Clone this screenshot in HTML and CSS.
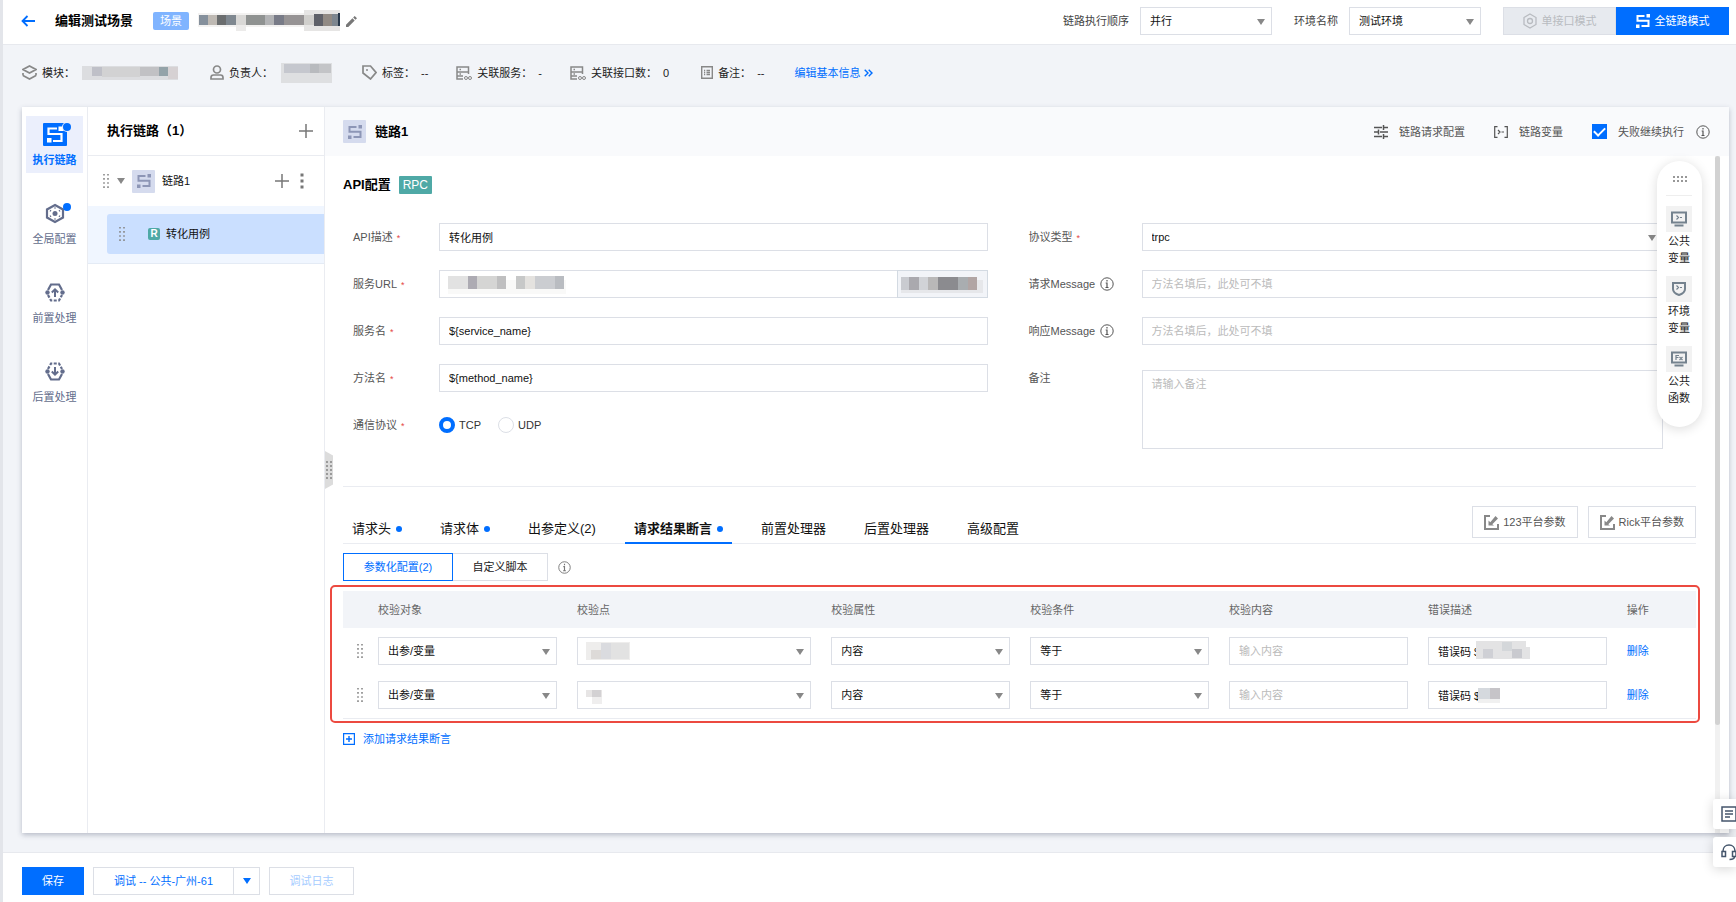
FILE: index.html
```
<!DOCTYPE html>
<html lang="zh-CN">
<head>
    <meta charset="UTF-8">
    <meta name="viewport" content="width=device-width, initial-scale=1.0">
    <title>编辑测试场景</title>
    <link rel="stylesheet" href="styles.css">
</head>
<body>
    <!-- shared icons -->
    <svg class="defs" width="0" height="0" aria-hidden="true">
        <symbol id="i-link" viewBox="0 0 14 14">
            <path d="M8.500 2H1.500V6.800H12.500V12H5.500" fill="none" stroke="currentColor" stroke-width="2"/>
            <path d="M10.500 0h3.500v3.500h-3.500zM0 10.500h3.500V14H0z" fill="currentColor"/>
        </symbol>
        <symbol id="i-info" viewBox="0 0 14 14">
            <circle cx="7" cy="7" r="6.200" fill="none" stroke="currentColor"/>
            <path d="M7 3v1.600M5.700 6H7v4.500M5.500 10.500h3" fill="none" stroke="currentColor" stroke-width="1.200"/>
        </symbol>
        <symbol id="i-plus" viewBox="0 0 14 14">
            <path d="M7 0v14M0 7h14" stroke="currentColor" stroke-width="1.500"/>
        </symbol>
        <symbol id="i-grip" viewBox="0 0 8 14">
            <path d="M2 0v14M6 0v14" stroke="currentColor" stroke-width="1.600" stroke-dasharray="1.600 2.500"/>
        </symbol>
        <symbol id="i-server" viewBox="0 0 16 14">
            <path d="M1 1h11.500v5H1zM1 1v12h6M1 6v4h6M12.500 6v2M3.500 3.500h1.500M3.500 8h1.500" fill="none" stroke="currentColor" stroke-width="1.500"/>
            <circle cx="10" cy="12" r="1.500" fill="none" stroke="currentColor"/>
            <circle cx="14" cy="12" r="1.500" fill="none" stroke="currentColor"/>
        </symbol>
        <symbol id="i-edit" viewBox="0 0 15 15">
            <path d="M6 1H1v13h13V9" fill="none" stroke="currentColor" stroke-width="2"/>
            <path d="M4.500 10.500V5.500l1.800 1.800L11.500 1l2.500 2.500-5.700 5.700 1.700 1.300z" fill="currentColor"/>
        </symbol>
    </svg>

    <header class="topbar">
        <button class="icon-btn back" aria-label="返回"><svg width="14" height="12" viewBox="0 0 14 12"><path d="M14 6H1.500M6.500 1l-5 5 5 5" fill="none" stroke="currentColor" stroke-width="1.800"/></svg></button>
        <h1>编辑测试场景</h1>
        <span class="badge">场景</span>
        <svg class="mosaic" width="142" height="24" viewBox="0 0 142 24">
            <path fill="#f3f2f1" d="M0 4h142v14H0z"/>
            <path fill="#85909c" d="M1 6h9v10H1z"/><path fill="#beb9b3" d="M10 6h9v10h-9z"/>
            <path fill="#6b6e6f" d="M19 6h9v10h-9z"/><path fill="#7f8890" d="M28 6h10v10H28z"/>
            <path fill="#d9d8d6" d="M38 6h10v10H38z"/><path fill="#ecebea" d="M38 16h10v6H38z"/>
            <path fill="#8f9291" d="M48 6h19v10H48z"/>
            <path fill="#b2b3b5" d="M67 6h9v10h-9z"/><path fill="#787b87" d="M76 6h10v10H76z"/>
            <path fill="#969394" d="M86 6h20v10H86z"/><path fill="#e6e5e4" d="M106 1h36v21h-36z"/>
            <path fill="#d0cfcc" d="M106 6h10v10h-10z"/>
            <path fill="#5f6169" d="M116 5h9v12h-9z"/><path fill="#918a84" d="M125 5h9v12h-9z"/>
            <path fill="#7d868f" d="M134 5h6v12h-6z"/><path fill="#28384a" d="M140 4h2v13h-2z"/>
        </svg>
        <button class="icon-btn" aria-label="编辑名称"><svg width="11" height="11" viewBox="0 0 12 12"><path d="M0 12V9.500L7 2.500 9.500 5l-7 7zM7.800 1.700L9.500 0 12 2.500l-1.700 1.700z" fill="#777"/></svg></button>
        <div class="topbar-right">
            <label for="order">链路执行顺序</label>
            <div class="select"><select id="order"><option>并行</option></select></div>
            <label for="env" class="env-label">环境名称</label>
            <div class="select"><select id="env"><option>测试环境</option></select></div>
            <div class="mode">
                <button disabled><svg width="14" height="16" viewBox="0 0 14 16"><path d="M7 1l6 3.500v7L7 15l-6-3.500v-7z" fill="none" stroke="currentColor" stroke-width="1.300"/><circle cx="7" cy="8" r="2.500" fill="none" stroke="currentColor" stroke-width="1.300"/></svg>单接口模式</button>
                <button class="on"><svg width="14" height="14"><use href="#i-link"/></svg>全链路模式</button>
            </div>
        </div>
    </header>

    <section class="info">
        <div class="info-item module"><svg width="15" height="15" viewBox="0 0 15 15"><path d="M7.500 1L14 4.500 7.500 8 1 4.500zM1 10.500L7.500 14 14 10.500M1 8v2.500M14 8v2.500" fill="none" stroke="currentColor" stroke-width="1.700"/></svg>模块：
            <svg class="mosaic" width="96" height="14" viewBox="0 0 96 14"><path fill="#dcdde0" d="M0 0h96v14H0z"/><path fill="#bfc0c8" d="M10 1h10v9H10z"/><path fill="#d2d2d3" d="M20 1h38v10H20z"/><path fill="#c1c1c4" d="M58 1h19v9H58z"/><path fill="#94a3a9" d="M77 1h9v9h-9z"/><path fill="#d6d1d3" d="M86 1h10v12H86z"/></svg>
        </div>
        <div class="info-item owner"><svg width="14" height="15" viewBox="0 0 14 15"><circle cx="7" cy="4.500" r="3.500" fill="none" stroke="currentColor" stroke-width="1.700"/><path d="M1 14v-1.500C1 11 2 10 3.500 10h7c1.500 0 2.500 1 2.500 2.500V14z" fill="none" stroke="currentColor" stroke-width="1.700"/></svg>负责人：
            <svg class="mosaic" width="52" height="20" viewBox="0 0 52 20"><path fill="#dedfe1" d="M1 0h51v20H1z"/><path fill="#c5c7ce" d="M4 1h26v9H4z"/><path fill="#b8babe" d="M30 1h9v9h-9z"/><path fill="#c3c4c7" d="M39 1h12v9H39z"/></svg>
        </div>
        <div class="info-item tag"><svg width="15" height="15" viewBox="0 0 15 15"><path d="M1 1h7.500l5.500 6.500L8.500 14 1 8z" fill="none" stroke="currentColor" stroke-width="1.700"/><circle cx="5" cy="5" r="1" fill="currentColor"/></svg>标签：<span>--</span></div>
        <div class="info-item service"><svg width="16" height="14"><use href="#i-server"/></svg>关联服务：<span>-</span></div>
        <div class="info-item port"><svg width="16" height="14"><use href="#i-server"/></svg>关联接口数：<span>0</span></div>
        <div class="info-item remark"><svg width="12" height="13" viewBox="0 0 12 13"><path d="M.7.700h10.600v11.600H.7zM3 4.500h1.200M5.500 4.500H9M3 6.500h1.200M5.500 6.500H9M3 8.500h1.200M5.500 8.500H9" fill="none" stroke="currentColor" stroke-width="1.400"/></svg>备注：<span>--</span></div>
        <a href="#">编辑基本信息<svg width="9" height="8" viewBox="0 0 9 8"><path d="M.7.700L4 4 .7 7.300M4.700.700L8 4 4.700 7.300" fill="none" stroke="currentColor" stroke-width="1.400"/></svg></a>
    </section>

    <main class="card">
        <nav class="rail">
            <a href="#" class="active">
                <svg width="28" height="26" viewBox="0 0 28 26"><rect x="0" y="2" width="24" height="23" rx="1" fill="#006eff"/><path d="M14 7.500H5.500V13H18.500V20H10" fill="none" stroke="#fff" stroke-width="2.200"/><path d="M4 17h4.500v4.500H4zM15.500 5.500h5V10h-5z" fill="#fff"/><circle cx="24" cy="6" r="5" fill="#ebeffc"/><circle cx="24" cy="6" r="4" fill="#006eff"/></svg>
                执行链路
            </a>
            <a href="#">
                <svg width="28" height="26" viewBox="0 0 28 26"><path d="M12 5l8 4.500v8L12 22l-8-4.500v-8z" fill="none" stroke="#636d8c" stroke-width="2.200"/><circle cx="12" cy="13.500" r="2.500" fill="#636d8c"/><path d="M12 7.500v1M12 18.500v1M7 10.500l1 .6M16 15.900l1 .6M7 16.500l1-.6M16 11.100l1-.6" stroke="#636d8c" stroke-width="1.800"/><circle cx="24" cy="7" r="4" fill="#006eff"/></svg>
                全局配置
            </a>
            <a href="#">
                <svg width="28" height="26" viewBox="0 0 28 26"><path d="M5 11l3-5.500h8l3 5.500" fill="none" stroke="#636d8c" stroke-width="2.200"/><path d="M5 16l3 5.500h8l3-5.500" fill="none" stroke="#636d8c" stroke-width="2.200" stroke-dasharray="3 1.500"/><circle cx="4.500" cy="13.500" r="2.200" fill="#636d8c"/><circle cx="19.500" cy="13.500" r="2.200" fill="#636d8c"/><path d="M12 18v-7M8.800 13.500L12 10.300l3.200 3.200" fill="none" stroke="#636d8c" stroke-width="2"/></svg>
                前置处理
            </a>
            <a href="#">
                <svg width="28" height="26" viewBox="0 0 28 26"><path d="M5 11l3-5.500h8l3 5.500" fill="none" stroke="#636d8c" stroke-width="2.200" stroke-dasharray="3 1.500"/><path d="M5 16l3 5.500h8l3-5.500" fill="none" stroke="#636d8c" stroke-width="2.200"/><circle cx="4.500" cy="13.500" r="2.200" fill="#636d8c"/><circle cx="19.500" cy="13.500" r="2.200" fill="#636d8c"/><path d="M12 9v7M8.800 13.500l3.200 3.200 3.200-3.200" fill="none" stroke="#636d8c" stroke-width="2"/></svg>
                后置处理
            </a>
        </nav>

        <aside class="tree">
            <div class="tree-head"><h2>执行链路（1）</h2><button class="icon-btn" aria-label="新增链路"><svg width="14" height="14"><use href="#i-plus"/></svg></button></div>
            <div class="tree-row">
                <svg class="grip" width="8" height="14"><use href="#i-grip"/></svg>
                <i class="caret"></i>
                <span class="chip"><svg width="14" height="14"><use href="#i-link"/></svg></span>
                <span class="name">链路1</span>
                <button class="icon-btn" aria-label="新增用例"><svg width="14" height="14"><use href="#i-plus"/></svg></button>
                <button class="icon-btn" aria-label="更多"><svg width="4" height="16" viewBox="0 0 4 16"><path d="M.5.500h3v3h-3zM.5 6.500h3v3h-3zM.5 12.500h3v3h-3z" fill="currentColor"/></svg></button>
            </div>
            <div class="tree-group">
                <div class="tree-item"><svg class="grip" width="8" height="14"><use href="#i-grip"/></svg><b>R</b>转化用例</div>
            </div>
        </aside>

        <section class="detail">
            <div class="detail-head">
                <span class="chip"><svg width="14" height="14"><use href="#i-link"/></svg></span>
                <h2>链路1</h2>
                <div class="tools">
                    <button class="tool"><svg width="14" height="14" viewBox="0 0 14 14"><path d="M0 2.500h8M10 2.500h4M0 7h4M6 7h8M0 11.500h8M10 11.500h4M9.500 0v5M4.500 4.500v5M9.500 9v5" fill="none" stroke="currentColor" stroke-width="1.500"/></svg>链路请求配置</button>
                    <button class="tool"><svg width="14" height="12" viewBox="0 0 14 12"><path d="M3.500.700H.7v10.600h2.800M10.500.700h2.800v10.600h-2.800M4 4l2 2-2 2M7.500 6h2.500" fill="none" stroke="currentColor" stroke-width="1.200"/></svg>链路变量</button>
                    <label class="check"><input type="checkbox" checked>失败继续执行</label>
                    <svg width="14" height="14"><use href="#i-info"/></svg>
                </div>
            </div>

            <div class="detail-body">
                <div class="section-title"><h2>API配置</h2><span class="rpc">RPC</span></div>

                <form class="form">
                    <div class="col">
                        <div class="field"><label for="desc">API描述<em>*</em></label><input id="desc" type="text" value="转化用例"></div>
                        <div class="field"><label for="url">服务URL<em>*</em></label>
                            <div class="url">
                                <input id="url" type="text">
                                <svg class="mosaic" width="118" height="20" viewBox="0 0 118 20"><path fill="#f9f9f8" d="M0 4h118v14H0z"/><path fill="#e2e2e2" d="M0 0h20v13H0z"/><path fill="#adabb3" d="M20 0h9v13h-9z"/><path fill="#d5d5d4" d="M29 0h20v13H29z"/><path fill="#bfbfc0" d="M49 0h9v13h-9z"/><path fill="#c7c8c8" d="M68 0h9v13h-9z"/><path fill="#e4e2df" d="M77 0h10v13H77z"/><path fill="#cbcdd1" d="M87 0h20v13H87z"/><path fill="#b9bcc1" d="M107 0h9v13h-9z"/></svg>
                                <span class="suffix"><svg width="82" height="20" viewBox="0 0 82 20"><path fill="#e6e7ea" d="M0 3h82v13H0z"/><path fill="#c9cbd0" d="M0 0h8v13H0z"/><path fill="#aaa9ae" d="M8 0h10v13H8z"/><path fill="#d1d3d7" d="M18 0h9v13h-9z"/><path fill="#b9b8b8" d="M27 0h10v13H27z"/><path fill="#8b8b8f" d="M37 0h20v13H37z"/><path fill="#a9adb0" d="M57 0h10v13H57z"/><path fill="#b1a5a4" d="M67 0h9v13h-9z"/></svg></span>
                            </div>
                        </div>
                        <div class="field"><label for="service">服务名<em>*</em></label><input id="service" type="text" value="${service_name}"></div>
                        <div class="field"><label for="method">方法名<em>*</em></label><input id="method" type="text" value="${method_name}"></div>
                        <div class="field"><span class="label">通信协议<em>*</em></span>
                            <label class="radio"><input type="radio" name="proto" checked>TCP</label>
                            <label class="radio"><input type="radio" name="proto">UDP</label>
                        </div>
                    </div>
                    <div class="col wide">
                        <div class="field"><label for="type">协议类型<em>*</em></label><div class="select"><select id="type"><option>trpc</option></select></div></div>
                        <div class="field"><label for="req">请求Message<svg width="14" height="14"><use href="#i-info"/></svg></label><input id="req" type="text" placeholder="方法名填后，此处可不填"></div>
                        <div class="field"><label for="rsp">响应Message<svg width="14" height="14"><use href="#i-info"/></svg></label><input id="rsp" type="text" placeholder="方法名填后，此处可不填"></div>
                        <div class="field area"><label for="note">备注</label><textarea id="note" placeholder="请输入备注"></textarea></div>
                    </div>
                </form>

                <div class="tabs">
                    <button class="dot">请求头</button>
                    <button class="dot">请求体</button>
                    <button>出参定义(2)</button>
                    <button class="dot on">请求结果断言</button>
                    <button>前置处理器</button>
                    <button>后置处理器</button>
                    <button>高级配置</button>
                    <div class="platform">
                        <button class="btn"><svg width="15" height="15"><use href="#i-edit"/></svg>123平台参数</button>
                        <button class="btn"><svg width="15" height="15"><use href="#i-edit"/></svg>Rick平台参数</button>
                    </div>
                </div>

                <div class="segment">
                    <button class="on">参数化配置(2)</button><button>自定义脚本</button>
                    <svg width="13" height="13"><use href="#i-info"/></svg>
                </div>

                <div class="highlight">
                    <table>
                        <colgroup><col class="c-grip"><col class="c-std"><col class="c-point"><col class="c-std"><col class="c-std"><col class="c-std"><col class="c-std"><col></colgroup>
                        <thead>
                            <tr><th></th><th>校验对象</th><th>校验点</th><th>校验属性</th><th>校验条件</th><th>校验内容</th><th>错误描述</th><th>操作</th></tr>
                        </thead>
                        <tbody>
                            <tr>
                                <td><svg class="grip" width="8" height="14"><use href="#i-grip"/></svg></td>
                                <td><div class="select"><select aria-label="校验对象"><option>出参/变量</option></select></div></td>
                                <td><div class="select"><select aria-label="校验点"><option></option></select><svg class="mosaic" width="44" height="18" viewBox="0 0 44 18"><path fill="#eeedec" d="M0 0h44v18H0z"/><path fill="#dddad8" d="M5 8h10v9H5z"/><path fill="#dadbdf" d="M15 1h10v16H15z"/><path fill="#e2e2e2" d="M25 1h18v16H25z"/></svg></div></td>
                                <td><div class="select"><select aria-label="校验属性"><option>内容</option></select></div></td>
                                <td><div class="select"><select aria-label="校验条件"><option>等于</option></select></div></td>
                                <td><input type="text" aria-label="校验内容" placeholder="输入内容"></td>
                                <td class="err"><input type="text" aria-label="错误描述" value="错误码 $"><svg class="mosaic" width="54" height="18" viewBox="0 0 54 18"><path fill="#e3e3e4" d="M0 0h50v6h4v12H0z"/><path fill="#cfd0d5" d="M7 8h10v9H7z"/><path fill="#d4d7da" d="M26 1h10v9H26z"/><path fill="#c9cacf" d="M36 8h10v9H36z"/></svg></td>
                                <td><a href="#">删除</a></td>
                            </tr>
                            <tr>
                                <td><svg class="grip" width="8" height="14"><use href="#i-grip"/></svg></td>
                                <td><div class="select"><select aria-label="校验对象"><option>出参/变量</option></select></div></td>
                                <td><div class="select"><select aria-label="校验点"><option></option></select><svg class="mosaic" width="44" height="18" viewBox="0 0 44 18"><path fill="#e7e5e5" d="M0 4h16v7H0z"/><path fill="#d3d1d3" d="M6 4h9v7H6z"/><path fill="#efeeee" d="M6 11h10v7H6z"/></svg></div></td>
                                <td><div class="select"><select aria-label="校验属性"><option>内容</option></select></div></td>
                                <td><div class="select"><select aria-label="校验条件"><option>等于</option></select></div></td>
                                <td><input type="text" aria-label="校验内容" placeholder="输入内容"></td>
                                <td class="err"><input type="text" aria-label="错误描述" value="错误码 $"><svg class="mosaic" width="54" height="18" viewBox="0 0 54 18"><path fill="#d5d9de" d="M2 2h12v11H2z"/><path fill="#c6c4c8" d="M14 2h10v11H14z"/><path fill="#f0f0f0" d="M2 13h22v4H2z"/></svg></td>
                                <td><a href="#">删除</a></td>
                            </tr>
                        </tbody>
                    </table>
                </div>

                <a href="#" class="add"><svg width="12" height="12" viewBox="0 0 12 12"><path d="M.5.500h11v11H.5zM6 3v6M3 6h6" fill="none" stroke="currentColor" stroke-width="1.400"/></svg>添加请求结果断言</a>
            </div>

            <div class="splitter"><svg width="6" height="18" viewBox="0 0 6 18"><path d="M1 0v18M5 0v18" stroke="#777" stroke-width="1.300" stroke-dasharray="2 2"/></svg></div>
            <div class="scroll"><i></i></div>
            <div class="palette">
                <svg class="dots" width="14" height="6" viewBox="0 0 14 6"><path d="M0 1h14M0 5h14" stroke="#777" stroke-width="1.600" stroke-dasharray="2 2"/></svg>
                <button><span><svg width="16" height="16" viewBox="0 0 16 16"><path d="M1 1.500h14v10H1zM3.500 14.500h9" fill="none" stroke="currentColor" stroke-width="2"/><path d="M5.500 4.500l2 2-2 2M9 6.500h2" fill="none" stroke="currentColor" stroke-width="1.200"/></svg></span>公共变量</button>
                <button><span><svg width="16" height="16" viewBox="0 0 16 16"><path d="M2 2h12v6c0 3-3 5-6 6-3-1-6-3-6-6z" fill="none" stroke="currentColor" stroke-width="2"/><path d="M5.500 4.500l2 2-2 2M9 6.500h2" fill="none" stroke="currentColor" stroke-width="1.200"/></svg></span>环境变量</button>
                <button><span><svg width="16" height="16" viewBox="0 0 16 16"><path d="M1 1.500h14v10H1zM3.500 14.500h9" fill="none" stroke="currentColor" stroke-width="2"/><path d="M5 9V4.500h3M5 6.500h2.500M8.500 6l3 3M11.500 6l-3 3" fill="none" stroke="currentColor" stroke-width="1.200"/></svg></span>公共函数</button>
            </div>
        </section>
    </main>

    <footer class="actions">
        <button class="btn primary">保存</button>
        <div class="split"><button class="btn">调试 -- 公共-广州-61</button><button class="btn" aria-label="选择环境"><i class="caret"></i></button></div>
        <button class="btn" disabled>调试日志</button>
    </footer>

    <div class="side-float">
        <button aria-label="文档"><svg width="16" height="16" viewBox="0 0 16 16"><path d="M1 1h14v14H1zM4 5h8M4 8h8M4 11h5" fill="none" stroke="currentColor" stroke-width="1.500"/></svg></button>
        <button aria-label="客服"><svg width="16" height="17" viewBox="0 0 16 17"><path d="M2 8V7c0-3.500 2.500-6 6-6s6 2.500 6 6v1M1 7.500h3.500v5H1zM11.500 7.500H15v5h-3.500zM13.500 12.500c0 2-2 3-5 3" fill="none" stroke="currentColor" stroke-width="1.500"/></svg></button>
    </div>
</body>
</html>
```

FILE: styles.css
```
* {
    box-sizing: border-box;
}
body {
    margin: 0;
    min-height: 100vh;
    display: flex;
    flex-direction: column;
    background: #f2f4f8;
    border-left: 3px solid #e3e5ea;
    color: #111;
    font: 11px/16px "Liberation Sans", "Noto Sans CJK SC", sans-serif;
}
svg {
    flex: none;
    display: block;
}
.defs {
    position: absolute;
}
h1, h2 {
    margin: 0;
    font-size: 13px;
    line-height: 20px;
    color: #000;
}
a {
    color: #006eff;
    text-decoration: none;
}
button, input, select, textarea {
    font: inherit;
    color: inherit;
    margin: 0;
}
button {
    padding: 0;
    border: 0;
    background: none;
    cursor: pointer;
}
.icon-btn {
    color: #777;
}
input[type="text"], select, textarea {
    display: block;
    width: 100%;
    height: 28px;
    padding: 0 9px;
    border: 1px solid #dcdfe6;
    border-radius: 0;
    background: #fff;
    outline: none;
}
textarea {
    height: 79px;
    padding: 5px 9px;
    resize: none;
}
::placeholder {
    color: #bbb;
    opacity: 1;
}
select {
    appearance: none;
}
.select {
    position: relative;
    flex: 1;
}
.select::after {
    content: "";
    position: absolute;
    right: 7px;
    top: 12px;
    border: 4px solid transparent;
    border-top: 6px solid #888;
    border-bottom: 0;
    pointer-events: none;
}
.caret {
    display: block;
    border: 4px solid transparent;
    border-top: 6px solid #888;
    border-bottom: 0;
}
.grip {
    color: #888;
}
.chip {
    display: flex;
    align-items: center;
    justify-content: center;
    width: 23px;
    height: 23px;
    background: #d5dbee;
    color: #8d96b6;
    border-radius: 1px;
}

/* top bar */
.topbar {
    display: flex;
    align-items: center;
    height: 45px;
    padding: 0 7px 2px 18px;
    background: #fff;
    border-bottom: 1px solid #e7e9ee;
}
.back {
    color: #006eff;
    margin-right: 20px;
}
.badge {
    margin: 0 9px 0 20px;
    padding: 1px 7px;
    background: #80b4ff;
    color: #fff;
    border-radius: 2px;
}
.topbar .mosaic {
    margin-right: 6px;
}
.topbar-right {
    display: flex;
    align-items: center;
    margin-left: auto;
    color: #444;
}
.topbar-right .select {
    flex: none;
    width: 132px;
    margin-left: 11px;
    color: #111;
}
.env-label {
    margin-left: 22px;
}
.mode {
    display: flex;
    margin-left: 22px;
}
.mode button {
    display: flex;
    align-items: center;
    justify-content: center;
    gap: 5px;
    width: 113px;
    height: 28px;
    background: #e7eaef;
    border: 1px solid #dcdfe6;
    color: #b8bbc0;
}
.mode .on {
    background: #006eff;
    border-color: #006eff;
    color: #fff;
}

/* basic info */
.info {
    display: flex;
    align-items: center;
    height: 62px;
    padding: 0 0 7px 19px;
    color: #222;
}
.info-item {
    display: flex;
    align-items: center;
    gap: 7px;
}
.info-item > svg:first-child {
    color: #888;
    margin-right: -2px;
}
.info-item span {
    margin-left: -1px;
}
.module, .port {
    margin-right: 32px;
}
.owner, .remark {
    margin-right: 30px;
}
.tag, .service {
    margin-right: 28px;
}
.info a {
    display: flex;
    align-items: center;
    gap: 4px;
}

/* card */
.card {
    flex: 1;
    display: flex;
    margin: 0 7px 19px 19px;
    background: #fff;
    box-shadow: 0 2px 5px rgba(50, 60, 90, 0.3);
}
.rail {
    width: 66px;
    padding: 9px 4px;
    border-right: 1px solid #eaecf1;
}
.rail a {
    display: flex;
    flex-direction: column;
    align-items: center;
    gap: 5px;
    height: 57px;
    margin-bottom: 22px;
    padding-top: 5px;
    color: #636d8c;
}
.rail svg {
    margin-left: 4px;
}
.rail .active {
    background: #ebeffc;
    color: #006eff;
    font-weight: bold;
}
.tree {
    width: 237px;
    border-right: 1px solid #eaecf1;
}
.tree-head {
    display: flex;
    align-items: center;
    justify-content: space-between;
    height: 49px;
    padding: 0 11px 0 19px;
    border-bottom: 1px solid #eaecf1;
}
.tree-row {
    display: flex;
    align-items: center;
    height: 50px;
    padding: 0 20px 0 14px;
}
.tree-row .caret {
    margin: 0 7px;
}
.tree-row .name {
    flex: 1;
    margin-left: 7px;
}
.tree-row .icon-btn + .icon-btn {
    margin-left: 11px;
}
.tree-group {
    padding: 8px 0 9px 19px;
    background: #f0f6ff;
    border-bottom: 1px solid #e4ebf5;
}
.tree-item {
    display: flex;
    align-items: center;
    height: 40px;
    padding-left: 11px;
    background: #cadfff;
    border-radius: 3px 0 0 3px;
}
.tree-item b {
    width: 12px;
    margin: 0 6px 0 22px;
    background: #4fa9a6;
    color: #fff;
    border-radius: 2px;
    font-size: 10px;
    line-height: 12px;
    text-align: center;
}

/* detail */
.detail {
    position: relative;
    flex: 1;
    min-width: 0;
}
.detail-head {
    display: flex;
    align-items: center;
    height: 49px;
    padding: 0 19px 0 18px;
    background: #f9fafc;
}
.detail-head h2 {
    margin-left: 9px;
}
.tools {
    display: flex;
    align-items: center;
    margin-left: auto;
    color: #555;
}
.tool {
    display: flex;
    align-items: center;
    gap: 11px;
    margin-right: 29px;
}
.check {
    display: flex;
    align-items: center;
    gap: 11px;
    margin-right: 12px;
}
.check input {
    appearance: none;
    display: flex;
    align-items: center;
    justify-content: center;
    width: 15px;
    height: 15px;
    background: #006eff;
}
.check input::before {
    content: "";
    width: 9px;
    height: 5px;
    margin-bottom: 3px;
    border: solid #fff;
    border-width: 0 0 2px 2px;
    transform: rotate(-45deg);
}
.detail-body {
    padding: 19px 33px 0 18px;
}
.section-title {
    display: flex;
    align-items: center;
    height: 19px;
}
.rpc {
    margin-left: 8px;
    padding: 0 4px;
    background: #4fa9a6;
    color: #fff;
    font-size: 12px;
    line-height: 18px;
    border-radius: 1px;
}
.form {
    display: flex;
    gap: 41px;
    padding: 29px 33px 37px 10px;
    border-bottom: 1px solid #eaecf1;
}
.col {
    flex: 1;
    display: flex;
    flex-direction: column;
    gap: 19px;
}
.field {
    display: flex;
    align-items: center;
    height: 28px;
    color: #555;
}
.field input[type="text"], .field .select {
    flex: 1;
    color: #111;
}
.field > label:first-child, .label {
    display: flex;
    align-items: center;
    width: 86px;
}
.wide .field > label:first-child {
    width: 113px;
}
.field label svg {
    margin-left: 5px;
}
.field em {
    margin: 2px 0 0 4px;
    color: #e54545;
    font-size: 9px;
    font-style: normal;
}
.area {
    align-items: flex-start;
    height: auto;
}
.area label {
    padding-top: 6px;
}
.area textarea {
    flex: 1;
    margin-top: 6px;
}
.url {
    position: relative;
    flex: 1;
    display: flex;
}
.url .mosaic {
    position: absolute;
    left: 9px;
    top: 6px;
}
.suffix {
    width: 91px;
    margin-left: -1px;
    padding: 6px 3px 0;
    background: #f2f4f8;
    border: 1px solid #d3dae2;
}
.field .radio {
    display: flex;
    align-items: center;
    gap: 4px;
    margin-right: 17px;
    color: #333;
}
.radio input {
    appearance: none;
    width: 16px;
    height: 16px;
    border: 1px solid #dcdfe6;
    border-radius: 50%;
}
.radio input:checked {
    border: 4px solid #006eff;
}

/* tabs */
.tabs {
    display: flex;
    align-items: flex-end;
    gap: 20px;
    height: 57px;
    border-bottom: 1px solid #eaecf1;
}
.tabs > button {
    display: flex;
    align-items: center;
    height: 29px;
    margin-bottom: -1px;
    padding: 0 9px;
    border-bottom: 2px solid transparent;
    font-size: 13px;
}
.tabs .dot::after {
    content: "";
    width: 6px;
    height: 6px;
    margin-left: 5px;
    background: #006eff;
    border-radius: 50%;
}
.tabs .on {
    border-bottom-color: #006eff;
    font-weight: bold;
}
.platform {
    display: flex;
    gap: 10px;
    margin: 0 0 5px auto;
    color: #555;
}
.btn {
    display: flex;
    align-items: center;
    justify-content: center;
    gap: 4px;
    height: 28px;
    border: 1px solid #dcdfe6;
    background: #fff;
}
.platform .btn {
    height: 32px;
    padding: 0 11px;
}
.platform svg {
    color: #888;
}
.segment {
    display: flex;
    align-items: center;
    margin-top: 9px;
    color: #777;
}
.segment button {
    height: 28px;
    width: 95px;
    border: 1px solid #dcdfe6;
    border-left: 0;
    color: #222;
}
.segment .on {
    width: 110px;
    border: 1px solid #006eff;
    color: #006eff;
}
.segment svg {
    margin-left: 10px;
}

/* assertions */
.highlight {
    margin: 4px -4px 0 -13px;
    padding: 4px 2px 2px 11px;
    border: 2px solid #ec4a40;
    border-radius: 5px;
}
table {
    width: 100%;
    table-layout: fixed;
    border-collapse: collapse;
    border-bottom: 1px solid #eaecf1;
}
.c-grip {
    width: 25px;
}
.c-std {
    width: 14.7%;
}
.c-point {
    width: 18.8%;
}
th {
    height: 37px;
    padding: 0 10px;
    background: #f2f4f8;
    color: #666;
    font-weight: normal;
    text-align: left;
}
td {
    height: 45px;
    padding: 0 10px;
}
td:first-child {
    padding: 0 0 0 13px;
}
.select .mosaic {
    position: absolute;
    left: 9px;
    top: 5px;
}
.err {
    position: relative;
}
.err .mosaic {
    position: absolute;
    left: 58px;
    top: 13px;
}
.add {
    display: inline-flex;
    align-items: center;
    gap: 8px;
    margin-top: 8px;
}

/* overlays */
.splitter {
    position: absolute;
    left: 0;
    top: 344px;
    display: flex;
    align-items: center;
    width: 8px;
    height: 38px;
    padding-left: 1px;
    background: #dcdcdc;
    clip-path: polygon(0 0, 100% 12%, 100% 88%, 0 100%);
}
.scroll {
    position: absolute;
    right: 9px;
    top: 49px;
    bottom: 0;
    width: 5px;
    background: #f1f1f1;
}
.scroll i {
    display: block;
    height: 84%;
    background: #d2d2d2;
    border-radius: 3px;
}
.palette {
    position: absolute;
    right: 27px;
    top: 54px;
    width: 45px;
    padding: 15px 9px 11px;
    background: #fff;
    border-radius: 23px;
    box-shadow: 0 2px 12px rgba(0, 0, 0, 0.14);
}
.dots {
    margin: 0 auto 13px;
}
.palette button {
    display: block;
    width: 26px;
    padding: 0 2px;
    margin-bottom: 9px;
    line-height: 17px;
    color: #222;
}
.palette button:nth-of-type(1) {
    padding-top: 10px;
    border-top: 1px solid #eee;
}
.palette span {
    display: flex;
    align-items: center;
    justify-content: center;
    height: 26px;
    margin: 0 -2px 1px;
    background: #f2f2f2;
    color: #74828e;
}
.side-float {
    position: fixed;
    right: 0;
    bottom: 35px;
    display: flex;
    flex-direction: column;
    gap: 8px;
}
.side-float button {
    width: 23px;
    height: 30px;
    padding-left: 8px;
    overflow: hidden;
    background: #fff;
    border-radius: 3px 0 0 3px;
    box-shadow: 0 2px 12px rgba(0, 0, 0, 0.16);
    color: #45566c;
}

/* bottom bar */
.actions {
    display: flex;
    gap: 9px;
    height: 50px;
    padding: 14px 19px 7px;
    background: #fff;
    border-top: 1px solid #e7e9ee;
    color: #006eff;
}
.actions .primary {
    width: 62px;
    background: #006eff;
    border-color: #006eff;
    color: #fff;
}
.split {
    display: flex;
}
.split .btn {
    width: 141px;
}
.split .btn + .btn {
    width: 27px;
    margin-left: -1px;
}
.split .caret {
    border-top-color: #006eff;
}
.actions .btn:disabled {
    width: 85px;
    color: #a6ccff;
}
```
